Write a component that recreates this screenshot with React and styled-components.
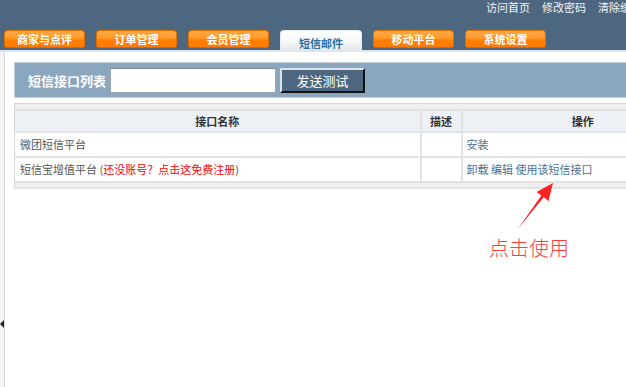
import React from "react";
import styled, { createGlobalStyle } from "styled-components";

const Global = createGlobalStyle`
  html, body { margin: 0; padding: 0; background: #fff; overflow: hidden; }
  body { font-family: "Noto Sans CJK SC", "Noto Sans", "Liberation Sans", sans-serif; }
  * { box-sizing: border-box; }
`;

const Page = styled.div`
  position: relative;
  width: 626px;
  height: 387px;
  overflow: hidden;
  display: flex;
  flex-direction: column;
`;

const Header = styled.header`
  height: 52px;
  flex: none;
  background: #4e6780;
  border-bottom: 2px solid #dde4ea;
  display: flex;
  flex-direction: column;
`;

const TopLinks = styled.nav`
  display: flex;
  gap: 12px;
  padding-left: 486px;
  height: 30px;
  white-space: nowrap;
`;

const TopLink = styled.a`
  color: #eef3f7;
  font-size: 11px;
  line-height: 15px;
  text-decoration: none;
  flex: none;
`;

const Tabs = styled.div`
  display: flex;
  align-items: flex-end;
  gap: 11px;
  padding-left: 4px;
  height: 20px;
`;

const Tab = styled.div`
  flex: none;
  width: ${(p) => (p.$active ? 82 : 81)}px;
  height: ${(p) => (p.$active ? 22 : 18)}px;
  margin-bottom: ${(p) => (p.$active ? -2 : 2)}px;
  border-radius: 4px 4px ${(p) => (p.$active ? "0 0" : "3px 3px")};
  display: flex;
  align-items: center;
  justify-content: center;
  font-size: 11px;
  font-weight: 700;
  color: ${(p) => (p.$active ? "#2d6f9e" : "#fff")};
  background: ${(p) =>
    p.$active
      ? "linear-gradient(#ffffff 0%, #f4f6f8 55%, #dfe4e8 100%)"
      : "linear-gradient(#ffa944 0%, #ff9a2a 45%, #ff7f00 55%, #ff7a00 100%)"};
  border: 1px solid ${(p) => (p.$active ? "#e8ecef" : "#e27000")};
  border-bottom: ${(p) => (p.$active ? "none" : "1px solid #d86a00")};
  padding-top: ${(p) => (p.$active ? 3 : 0)}px;
`;

const Body = styled.div`
  flex: 1;
  display: flex;
`;

const LeftStrip = styled.div`
  position: relative;
  width: 5px;
  flex: none;
  background: #f3f4f5;
  border-right: 1px solid #d4d6d8;
`;

const Collapse = styled.span`
  position: absolute;
  left: 0;
  top: 268px;
  width: 0;
  height: 0;
  border-top: 4px solid transparent;
  border-bottom: 4px solid transparent;
  border-right: 4px solid #222;
`;

const Main = styled.main`
  flex: none;
  width: 720px;
  padding: 10px 0 0 9px;
  display: flex;
  flex-direction: column;
  gap: 5px;
`;

const Toolbar = styled.div`
  height: 36px;
  background: #8ba7bf;
  border: 1px solid #c6d0d9;
  display: flex;
  align-items: center;
  padding-left: 13px;
`;

const Label = styled.span`
  color: #fff;
  font-weight: 700;
  font-size: 13px;
  margin-right: 4px;
`;

const Input = styled.input`
  width: 166px;
  height: 25px;
  border: 1px solid #9aa5ae;
  border-top-color: #7f8a94;
  background: #fff;
  margin: 0 4px 0 0;
`;

const Button = styled.button`
  width: 85px;
  height: 25px;
  background: #4d6780;
  color: #fff;
  font-family: inherit;
  font-size: 13px;
  border-style: solid;
  border-width: 2px;
  border-color: #dfe3e7 #111 #111 #dfe3e7;
  padding: 0;
`;

const Table = styled.table`
  width: 690px;
  border-collapse: collapse;
  border: 1px solid #d4d4d4;
  font-size: 11px;
  color: #555;
`;

const Band = styled.tr`
  td {
    height: 6px;
    background: #efefef;
    padding: 0;
    border-bottom: 2px solid #e2e2e2;
  }
`;

const Th = styled.th`
  height: 22px;
  background: #edf1f5;
  color: #333;
  font-weight: 700;
  text-align: center;
  padding: 0;
  width: ${(p) => p.$w}px;
  border-left: 2px solid #e2e2e2;
  border-bottom: 2px solid #e2e2e2;
  &:first-child { border-left: none; }
`;

const Td = styled.td`
  height: 25px;
  padding: 0 0 0 4px;
  border-left: 2px solid #e2e2e2;
  border-bottom: 2px solid #e2e2e2;
  &:first-child { border-left: none; padding-left: 5px; }
`;

const Red = styled.span`
  color: #ff0000;
`;

const Ops = styled.span`
  color: #4b6f92;
`;

const Overlay = styled.svg`
  position: absolute;
  left: 0;
  top: 0;
  pointer-events: none;
`;

const Note = styled.div`
  position: absolute;
  left: 489px;
  top: 233px;
  font-size: 20px;
  font-weight: 300;
  color: #ff3b3b;
`;

export default function App() {
  const tabs = ["商家与点评", "订单管理", "会员管理", "短信邮件", "移动平台", "系统设置"];
  return (
    <Page>
      <Global />
      <Header>
        <TopLinks>
          <TopLink>访问首页</TopLink>
          <TopLink>修改密码</TopLink>
          <TopLink>清除缓存</TopLink>
        </TopLinks>
        <Tabs>
          {tabs.map((t, i) => (
            <Tab key={t} $active={i === 3}>
              {t}
            </Tab>
          ))}
        </Tabs>
      </Header>
      <Body>
        <LeftStrip>
          <Collapse />
        </LeftStrip>
        <Main>
          <Toolbar>
            <Label>短信接口列表</Label>
            <Input />
            <Button>发送测试</Button>
          </Toolbar>
          <Table>
            <tbody>
              <Band>
                <td colSpan={3} />
              </Band>
              <tr>
                <Th $w={406}>接口名称</Th>
                <Th $w={41}>描述</Th>
                <Th>操作</Th>
              </tr>
              <tr>
                <Td>微团短信平台</Td>
                <Td />
                <Td>
                  <Ops>安装</Ops>
                </Td>
              </tr>
              <tr>
                <Td>
                  短信宝增值平台 (<Red>还没账号？点击这免费注册</Red>)
                </Td>
                <Td />
                <Td>
                  <Ops>卸载 编辑 使用该短信接口</Ops>
                </Td>
              </tr>
              <Band>
                <td colSpan={3} />
              </Band>
            </tbody>
          </Table>
        </Main>
      </Body>
      <Overlay width="626" height="387" viewBox="0 0 626 387">
        <polygon
          points="517.5,229.5 543.7,197.3 548.5,201 553,183 536.5,192 541.3,195.5"
          fill="#ff2424"
        />
      </Overlay>
      <Note>点击使用</Note>
    </Page>
  );
}
